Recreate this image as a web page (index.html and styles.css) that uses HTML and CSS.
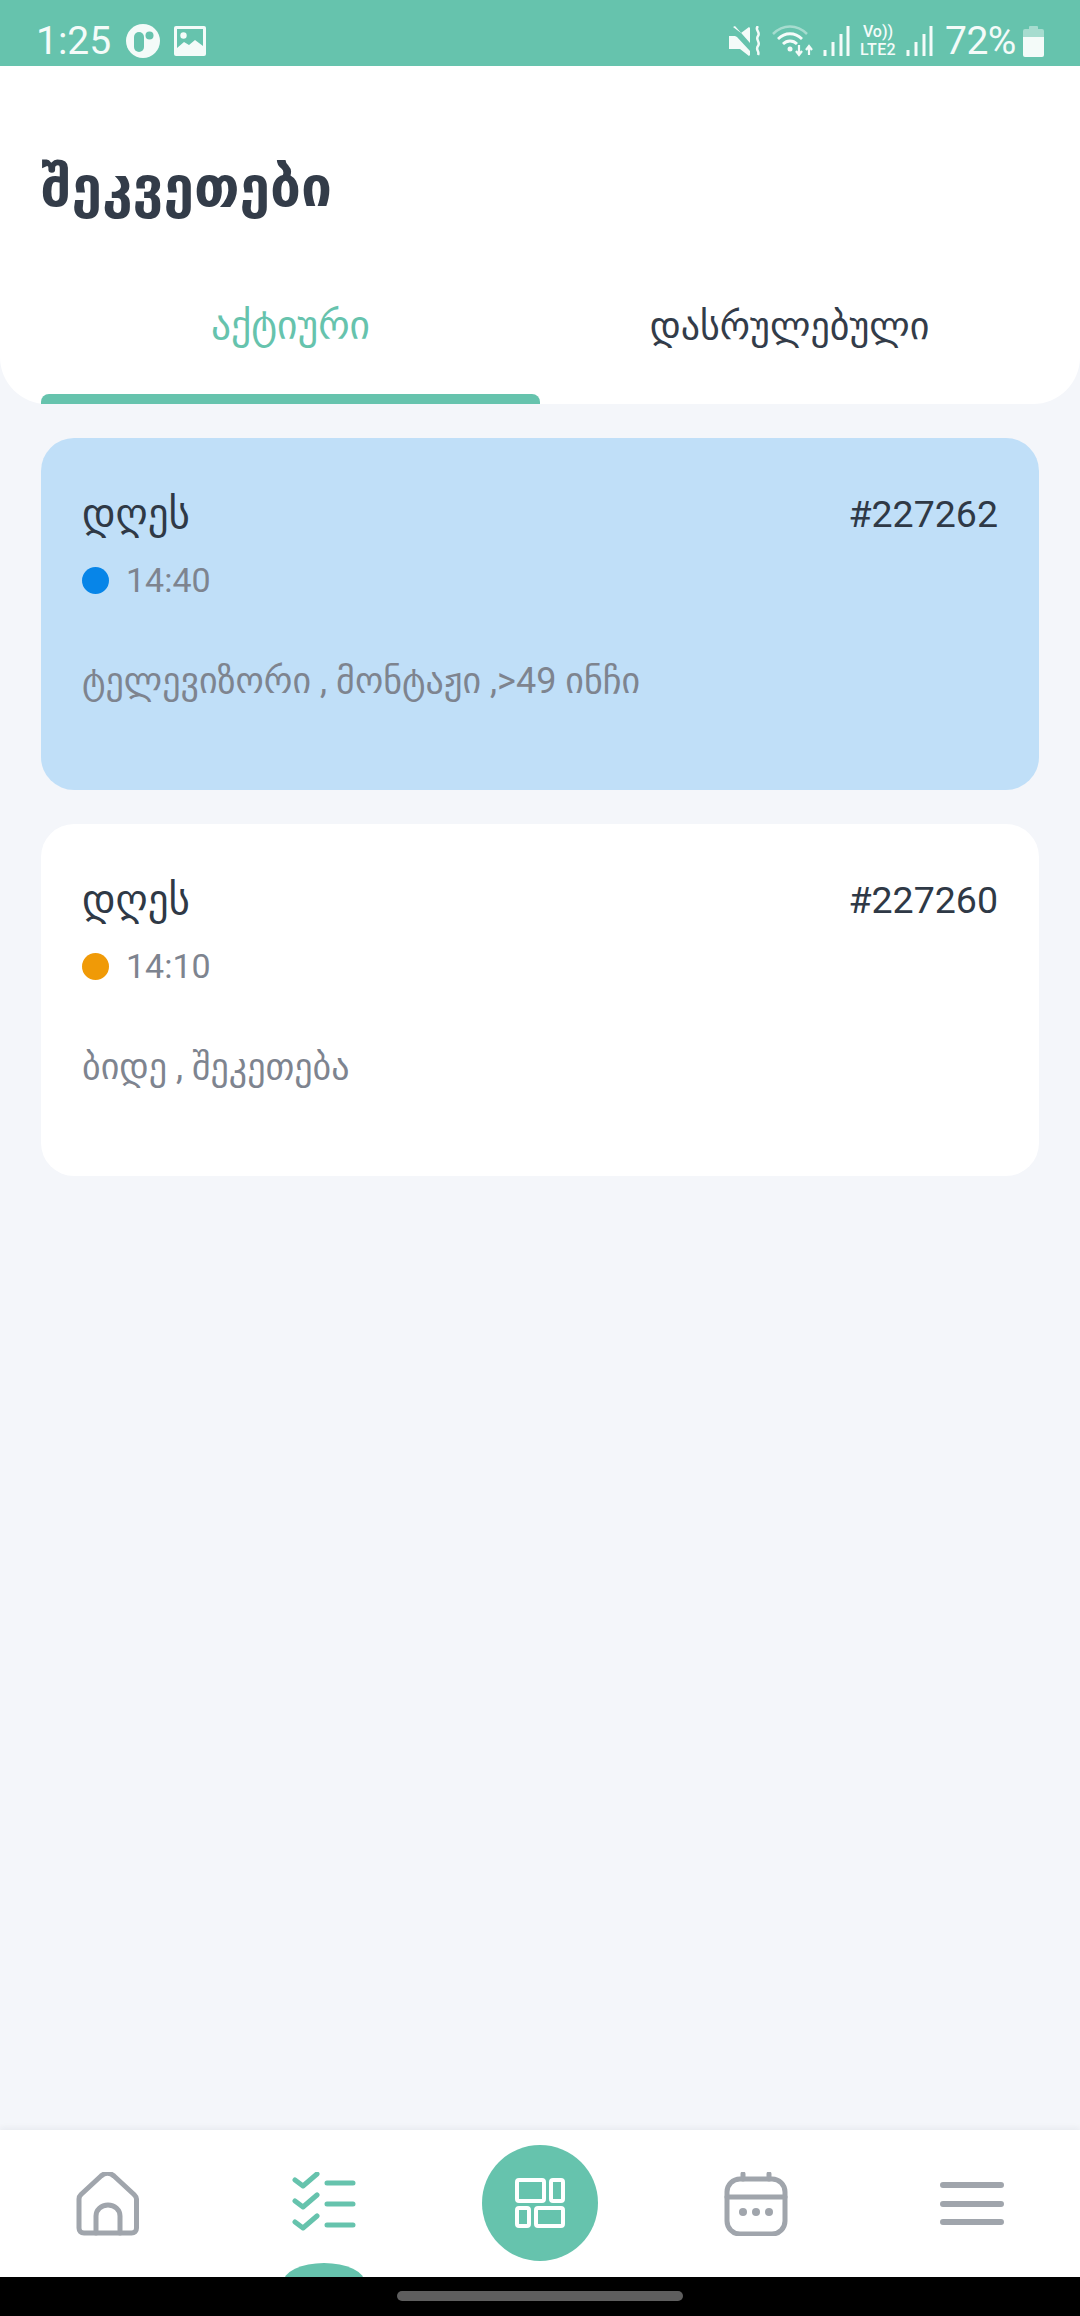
FILE: index.html
```html
<!DOCTYPE html>
<html lang="ka">
<head>
<meta charset="utf-8">
<title>შეკვეთები</title>
<link rel="stylesheet" href="styles.css">
</head>
<body>
<div class="phone">
  <div class="status">
    <div class="status-left">
      <span class="clock">1:25</span>
      <svg class="ic-p" viewBox="0 0 34 34"><circle cx="17" cy="17" r="17" fill="#f4fbf9"/><rect x="8" y="8" width="10" height="20" rx="5" fill="#66c3ad"/><circle cx="23.500" cy="11.500" r="4" fill="#66c3ad"/></svg>
      <svg class="ic-img" viewBox="0 0 32 30"><rect width="32" height="30" rx="2" fill="#f4fbf9"/><rect x="3" y="3" width="26" height="24" fill="#66c3ad"/><circle cx="9.500" cy="9.500" r="3.200" fill="#f4fbf9"/><path d="M3 22l7-6 5 3 6-5 8 6v9H3z" fill="#f4fbf9"/></svg>
    </div>
    <div class="status-right">
      <svg class="ic-mute" viewBox="0 0 33 30"><path d="M0 10h6l2 1 13 14v4l-1 1-9-7H0zM4 1l2-1 15 17V2l-1-1-8 6z" fill="#f4fbf9"/><path d="M29 0c-4 4 3 6 0 10s3 6 0 10 2 5 0 9" fill="none" stroke="#f4fbf9" stroke-width="2.500"/></svg>
      <svg class="ic-wifi" viewBox="0 0 42 32"><path d="M1 9C11-1 25-1 35 9" fill="none" stroke="#a6dccf" stroke-width="2.500"/><path d="M6 14c7-7 17-7 24 0M11 19c4-4 10-4 14 0" fill="none" stroke="#f4fbf9" stroke-width="2.800"/><circle cx="18" cy="24" r="2.500" fill="#f4fbf9"/><path d="M27 20v9M24 26l3 4 3-4M37 30v-9M34 25l3-4 3 4" fill="none" stroke="#f4fbf9" stroke-width="2.200"/></svg>
      <svg class="ic-sig" viewBox="0 0 27 30"><path d="M2 24v6M10 16v14M18 8v22M25 0v30" fill="none" stroke="#f4fbf9" stroke-width="3"/></svg>
      <span class="volte"><span class="vo">Vo))</span><span class="lte">LTE2</span></span>
      <svg class="ic-sig ic-sig2" viewBox="0 0 27 30"><path d="M2 24v6M10 16v14M18 8v22M25 0v30" fill="none" stroke="#f4fbf9" stroke-width="3"/></svg>
      <span class="pct">72%</span>
      <svg class="ic-bat" viewBox="0 0 21 32"><path d="M6 2a1 1 0 0 1 1-1h7a1 1 0 0 1 1 1v2h4a2 2 0 0 1 2 2v6H0V6a2 2 0 0 1 2-2h4z" fill="#a6dccf"/><path d="M0 12h21v18a2 2 0 0 1-2 2H2a2 2 0 0 1-2-2z" fill="#f4fbf9"/></svg>
    </div>
  </div>

  <header class="head">
    <h1 class="title">შეკვეთები</h1>
    <div class="tabs">
      <div class="tab tab-on"><span class="tab-label">აქტიური</span><span class="tab-bar"></span></div>
      <div class="tab"><span class="tab-label">დასრულებული</span></div>
    </div>
  </header>

  <main class="list">
    <article class="card card-blue">
      <div class="card-top"><span class="day">დღეს</span><span class="num">#227262</span></div>
      <div class="when"><span class="dot dot-blue"></span><span class="time">14:40</span></div>
      <p class="desc">ტელევიზორი , მონტაჟი ,&gt;49 ინჩი</p>
    </article>
    <article class="card">
      <div class="card-top"><span class="day">დღეს</span><span class="num">#227260</span></div>
      <div class="when"><span class="dot dot-orange"></span><span class="time">14:10</span></div>
      <p class="desc">ბიდე , შეკეთება</p>
    </article>
  </main>

  <nav class="nav">
    <div class="nav-item">
      <svg class="ic-nav" viewBox="0 0 64 64" fill="none" stroke="#a0a5ac" stroke-width="5" stroke-linecap="round" stroke-linejoin="round"><path d="M3 27c0-2 .5-3 2-4.500L25 4c4-3.500 9-3.500 13 0l20 18.500c1.500 1.500 2.500 2.500 2.500 4.500v29c0 3-2 5-5 5H8c-3 0-5-2-5-5z"/><path d="M20 61V44c0-6 5-11 12-11s12 5 12 11v17"/></svg>
    </div>
    <div class="nav-item">
      <svg class="ic-nav" viewBox="0 0 64 64" fill="none" stroke="#66c3ad" stroke-width="5" stroke-linecap="round" stroke-linejoin="round"><path d="M3 8l8 6 14-12M3 29l8 6 14-12M3 50l8 6 14-12"/><path d="M35 11h26M35 32h26M35 53h26"/></svg>
      <span class="nav-mark"></span>
    </div>
    <div class="nav-item">
      <div class="nav-fab">
        <svg class="ic-fab" viewBox="0 0 50 50" fill="none" stroke="#fff" stroke-width="4" stroke-linejoin="round"><rect x="2" y="2" width="27" height="21" rx="2"/><rect x="36" y="2" width="12" height="21" rx="2"/><rect x="2" y="30" width="12" height="18" rx="2"/><rect x="21" y="30" width="27" height="18" rx="2"/></svg>
      </div>
    </div>
    <div class="nav-item">
      <svg class="ic-nav" viewBox="0 0 64 64" fill="none" stroke="#a0a5ac" stroke-width="5" stroke-linecap="round"><rect x="3" y="7" width="58" height="55" rx="13"/><path d="M3 25h58M19 2v5M45 2v5"/><g fill="#a0a5ac" stroke="none"><circle cx="19" cy="40" r="4"/><circle cx="32" cy="40" r="4"/><circle cx="45" cy="40" r="4"/></g></svg>
    </div>
    <div class="nav-item">
      <svg class="ic-nav" viewBox="0 0 64 64" fill="none" stroke="#a0a5ac" stroke-width="6" stroke-linecap="round"><path d="M3 13h58M3 32h58M3 50h58"/></svg>
    </div>
  </nav>

  <div class="sysbar"><span class="pill"></span></div>
</div>
</body>
</html>
```
FILE: styles.css
```css
* { box-sizing: border-box; }
html, body { margin: 0; padding: 0; }
body { font-family: Roboto, "DejaVu Sans", sans-serif; background: #f4f6fa; }

.phone { width: 1080px; height: 2316px; display: flex; flex-direction: column; background: #f4f6fa; overflow: hidden; }

/* status bar */
.status { height: 66px; flex: none; background: #66c3ad; display: flex; justify-content: space-between; align-items: center; padding: 16px 36px 0 36px; color: #f4fbf9; }
.status-left { display: flex; align-items: center; }
.clock { font-size: 39px; line-height: 46px; width: 90px; }
.ic-p { width: 34px; height: 34px; }
.ic-img { width: 32px; height: 30px; margin-left: 14px; }
.status-right { display: flex; align-items: center; }
.ic-mute { width: 33px; height: 30px; }
.ic-wifi { width: 42px; height: 32px; margin-left: 10px; }
.ic-sig { width: 27px; height: 30px; margin-left: 9px; }
.ic-sig2 { margin-left: 7px; }
.volte { display: flex; flex-direction: column; align-items: center; width: 42px; margin-left: 7px; font-weight: 500; line-height: 18px; }
.vo { font-size: 16px; }
.lte { font-size: 16px; letter-spacing: .4px; }
.pct { font-size: 39px; line-height: 46px; margin-left: 12px; width: 78px; letter-spacing: -0.5px; }
.ic-bat { width: 21px; height: 32px; }

/* header */
.head { flex: none; height: 338px; background: #fff; border-radius: 0 0 47px 47px / 0 0 47px 47px; padding: 0 41px; display: flex; flex-direction: column; }
.title { margin: 89px 0 0; font-size: 55px; line-height: 64px; font-weight: 700; color: #333c49; }
.tabs { display: flex; margin: auto 0 0 0; height: 136px; }
.tab { flex: 1; display: flex; flex-direction: column; align-items: center; position: relative; color: #333c49; }
.tab-label { font-size: 38px; line-height: 44px; margin-top: 36px; }
.tab-on { color: #66c3ad; }
.tab-on .tab-label { font-size: 39.500px; }
.tab-bar { position: absolute; left: 0; right: 0; bottom: 0; height: 10px; background: #66c3ad; border-radius: 8px 8px 0 0; }

/* cards */
.list { flex: 1; padding: 34px 41px 0; display: flex; flex-direction: column; gap: 34px; }
.card { height: 352px; background: #fff; border-radius: 33px; padding: 52px 41px 0; }
.card-blue { background: #c0dff8; }
.card-top { display: flex; justify-content: space-between; align-items: center; height: 48px; }
.day { font-size: 41px; color: #2f3946; }
.num { font-size: 37.500px; color: #2f3946; }
.when { display: flex; align-items: center; margin-top: 22px; height: 40px; }
.dot { width: 27px; height: 27px; border-radius: 50%; }
.dot-blue { background: #0785e8; }
.dot-orange { background: #f09a07; }
.time { font-size: 34px; color: #7e848f; margin-left: 17px; }
.desc { margin: 59px 0 0; font-size: 36px; line-height: 44px; color: #7e848f; }

/* bottom nav */
.nav { flex: none; height: 147px; background: #fff; display: grid; grid-template-columns: repeat(5, 216px); box-shadow: 0 -2px 6px rgba(40, 50, 70, .06); position: relative; }
.nav-item { display: flex; justify-content: center; align-items: center; position: relative; }
.ic-nav { width: 64px; height: 64px; }
.nav-mark { position: absolute; left: 67px; bottom: -26px; width: 82px; height: 40px; border-radius: 50%; background: #66c3ad; }
.nav-fab { width: 116px; height: 116px; border-radius: 50%; background: #66c3ad; display: flex; align-items: center; justify-content: center; margin-bottom: 2px; }
.ic-fab { width: 50px; height: 50px; }
.sysbar { flex: none; height: 39px; background: #000; display: flex; justify-content: center; align-items: flex-start; padding-top: 14px; position: relative; }
.pill { width: 286px; height: 10px; border-radius: 5px; background: #5e5e5e; }
```
